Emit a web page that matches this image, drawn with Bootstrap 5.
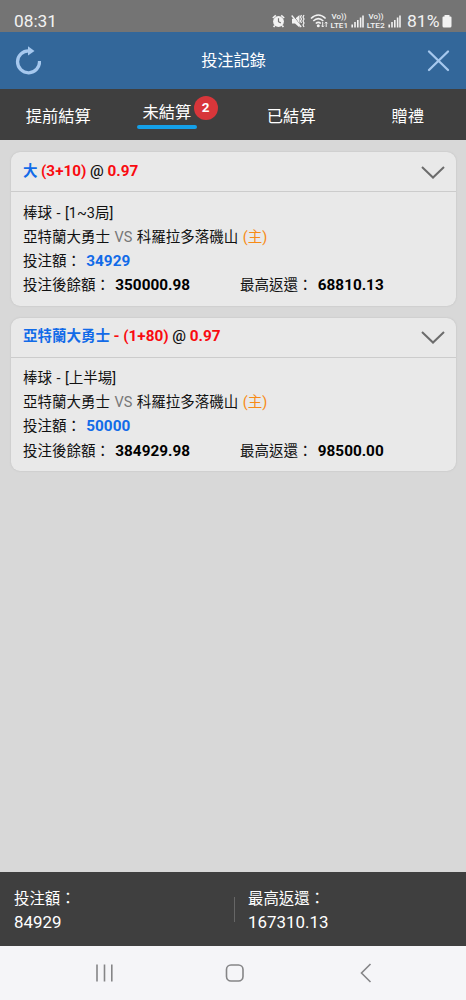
<!DOCTYPE html>
<html lang="zh-TW">
<head>
<meta charset="utf-8">
<meta name="viewport" content="width=device-width, initial-scale=1">
<title>投注記錄</title>
<link href="https://cdn.jsdelivr.net/npm/bootstrap@5.3.0/dist/css/bootstrap.min.css" rel="stylesheet">
<style>
body{font-family:Roboto,"Noto Sans CJK TC",sans-serif;background:#d8d8d8;color:#111;white-space:nowrap}
.statusbar{height:32px;background:#747474;color:#f2f2f2;padding:9px 14px 0;font-size:17.3px;line-height:24px}
.statusbar svg{display:block;margin-right:-1px}
.titlebar{height:57px;background:#33679a;color:#fff;font-size:16.2px;padding:0 14px}
.titlebar span{padding:2px 1px 0 0}
.tabs{height:51px;background:#3f3f3f;color:#fff;font-size:16.3px;line-height:24px}
.tabs a{color:#fff;text-decoration:none;padding-top:16px}
.tabs .current{padding:12px 0 0 26px}
.tabs .current::after{content:"";display:block;width:60px;height:4px;border-radius:2px;background:#14a0e8;margin:0 0 0 -6px}
.count{position:absolute;top:-7px;left:51px;width:24px;height:24px;border-radius:50%;background:#d8363a;font-size:13.5px;font-weight:700;line-height:23px;text-align:center}
.bets{padding:12px 10px 0 11px;gap:12px}
.bet{height:153.5px;background:#e9e9e9;border-radius:9px;box-shadow:0 0 2px #bbb;font-size:14.5px;line-height:24.2px;word-spacing:.9px}
.bet header{height:40px;border-bottom:1px solid #ccc;padding:0 10px 0 12px;font-weight:700;word-spacing:-.1px}
.bet header>span{padding-top:1px}
.bet-body{padding:9.5px 12px 0}
.bet-body>div{height:24.2px}
.lat{font-size:15.3px;line-height:1}
.bet-body .lat{margin-left:.8px;color:#000}
.bet-body .lat.blue{color:#126be8}
.blue{color:#126be8}.red{color:#f90b10}.orange{color:#f78b16}.grey{color:#777}
.half{width:217px}
.totals{height:74px;background:#3f3f3f;color:#fff;font-size:15.4px;line-height:23px;padding:16px 14px 0}
.totals .sum{font-size:16.9px}
.split{width:1px;height:25px;background:#666;margin:9px 13px 0 0}
.left-total{width:220px}
.sysnav{height:54px;background:#f5f5f8}
</style>
<script src="https://cdn.jsdelivr.net/npm/bootstrap@5.3.0/dist/js/bootstrap.bundle.min.js"></script>
</head>
<body class="vh-100 d-flex flex-column overflow-hidden">
<div class="statusbar d-flex justify-content-between flex-shrink-0">
  <span>08:31</span>
  <svg width="183" height="23" viewBox="270 9 183 23" fill="none" stroke="#f2f2f2" font-family="Roboto">
    <circle cx="278.5" cy="21.5" r="5.4" fill="#f2f2f2" stroke="none"/><path d="M272.8 18l3-2.6M284.2 18l-3-2.6M274.8 25.5l-1.2 1.5M282.2 25.5l1.2 1.5" stroke-width="1.6"/><path d="M278.5 18.2v3.5l2.3 1.2" stroke="#747474" stroke-width="1.2"/>
    <path d="M292 18.8h3l4.500-3.800v12.500l-4.500-3.900h-3z" fill="#f2f2f2" stroke="none"/><path d="M293 15l8.500 12" stroke="#747474" stroke-width="1"/><path d="M291.700 15.500l9.500 11.500" stroke-width="1.300"/><path d="M301.5 15l-1 2 1 2-1 2 1 2M304 15l-1 2 1 2-1 2 1 2-1 2 1 2" stroke-width="1.2"/>
    <path d="M311 18.5q7.3-7 14.6 0M313.3 21q5-4.6 10 0M315.8 23.5q2.5-2.3 5 0" stroke-width="1.6"/><circle cx="318.3" cy="25.8" r="1.5" fill="#f2f2f2" stroke="none"/><path d="M322.7 22v5m-1.3-1.4l1.3 1.4 1.3-1.4M326.2 27v-5m-1.3 1.4l1.3-1.4 1.3 1.4" stroke-width="1"/>
    <g fill="#f2f2f2" stroke="none" font-weight="500"><text x="331.500" y="18.9" font-size="7.2" textLength="15" lengthAdjust="spacingAndGlyphs">Vo))</text><text x="330.5" y="27.8" font-size="7.6" textLength="17.5" lengthAdjust="spacingAndGlyphs">LTE1</text><text x="368.500" y="18.9" font-size="7.2" textLength="15" lengthAdjust="spacingAndGlyphs">Vo))</text><text x="366.8" y="27.8" font-size="7.6" textLength="18" lengthAdjust="spacingAndGlyphs">LTE2</text></g>
    <path id="sig" d="M352.2 27.5v-3M355 27.5v-5.5M357.8 27.5v-7.5M360.6 27.5v-10M363 27.5v-12" stroke-width="1.6"/><use href="#sig" x="37"/>
    <text x="407" y="27" font-size="17.3" textLength="32.5" lengthAdjust="spacingAndGlyphs" fill="#f2f2f2" stroke="none">81%</text>
    <path d="M444.5 15h5v1.5h1q1 0 1 1v8.500q0 1.500-1.500 1.500h-6q-1.500 0-1.500-1.500v-8.500q0-1 1-1h1z" fill="#f2f2f2" stroke="none"/>
  </svg>
</div>
<div class="titlebar d-flex align-items-center justify-content-between flex-shrink-0">
  <svg width="27" height="30" viewBox="13.500 45.500 27 30"><path d="M28.500 50.300A11 11 0 1 0 39 60.500" fill="none" stroke="#a6c8ee" stroke-width="3.300"/><path d="M27.500 45.800l6.500 4.700-6.500 4.500z" fill="#a6c8ee"/></svg>
  <span>投注記錄</span>
  <svg width="25" height="24" viewBox="427 49 25 24"><path d="M429 51.500l19 18.500M448 51.500l-19 18.500" stroke="#a6c8ee" stroke-width="2.300" stroke-linecap="round"/></svg>
</div>
<nav class="tabs d-flex flex-shrink-0">
  <a class="w-25 text-center" href="#">提前結算</a>
  <a class="w-25 current" href="#"><span class="position-relative">未結算<span class="count">2</span></span></a>
  <a class="w-25 text-center" href="#">已結算</a>
  <a class="w-25 text-center" href="#">贈禮</a>
</nav>
<main class="bets flex-grow-1 d-flex flex-column">
  <article class="bet">
    <header class="d-flex align-items-center justify-content-between"><span><span class="blue">大</span> <span class="lat"><span class="red">(3+10)</span> <span class="fw-medium">@</span> <span class="red">0.97</span></span></span>
    <svg width="25" height="16" viewBox="0 0 25 16"><path d="M1 3l11 10.500L23 3" fill="none" stroke="#6c6c6c" stroke-width="2"/></svg></header>
    <div class="bet-body">
      <div>棒球 - [1~3局]</div>
      <div>亞特蘭大勇士 <span class="grey">VS</span> 科羅拉多落磯山 <span class="orange">(主)</span></div>
      <div>投注額： <b class="lat blue">34929</b></div>
      <div class="d-flex"><div class="half">投注後餘額： <b class="lat">350000.98</b></div><div>最高返還： <b class="lat">68810.13</b></div></div>
    </div>
  </article>
  <article class="bet">
    <header class="d-flex align-items-center justify-content-between"><span><span class="blue">亞特蘭大勇士</span> <span class="lat"><span class="red">- (1+80)</span> <span class="fw-medium">@</span> <span class="red">0.97</span></span></span>
    <svg width="25" height="16" viewBox="0 0 25 16"><path d="M1 3l11 10.500L23 3" fill="none" stroke="#6c6c6c" stroke-width="2"/></svg></header>
    <div class="bet-body">
      <div>棒球 - [上半場]</div>
      <div>亞特蘭大勇士 <span class="grey">VS</span> 科羅拉多落磯山 <span class="orange">(主)</span></div>
      <div>投注額： <b class="lat blue">50000</b></div>
      <div class="d-flex"><div class="half">投注後餘額： <b class="lat">384929.98</b></div><div>最高返還： <b class="lat">98500.00</b></div></div>
    </div>
  </article>
</main>
<footer class="totals d-flex flex-shrink-0">
  <div class="left-total"><div>投注額：</div><div class="sum">84929</div></div>
  <div class="split"></div>
  <div><div>最高返還：</div><div class="sum">167310.13</div></div>
</footer>
<div class="sysnav flex-shrink-0">
  <svg class="d-block" width="466" height="54" fill="none" stroke="#858587" stroke-width="1.600"><path d="M97 18.500v17M104.500 18.500v17M111.800 18.500v17"/><rect x="226.500" y="19" width="16.500" height="16" rx="4.500"/><path d="M370.500 18l-9 9 9 9"/></svg>
</div>
</body>
</html>
